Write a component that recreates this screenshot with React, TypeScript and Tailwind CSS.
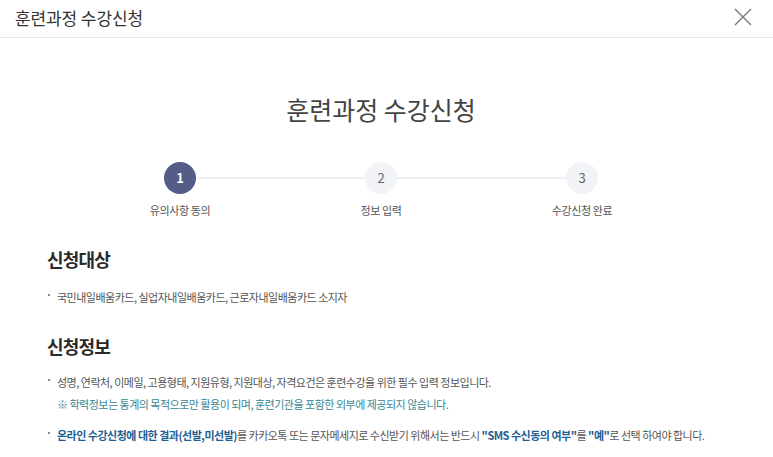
import React from "react";

const F = { fontFamily: '"Noto Sans CJK KR", "Noto Sans", sans-serif' };

function Bullet({ children, className = "" }: { children: React.ReactNode; className?: string }) {
  return (
    <div className={"flex items-start " + className}>
      <span className="mt-[5px] mr-[7px] ml-[1px] h-[2px] w-[2px] shrink-0 bg-[#888]" />
      <div>{children}</div>
    </div>
  );
}

export default function App() {
  const steps = [
    { n: "1", label: "유의사항 동의", active: true },
    { n: "2", label: "정보 입력", active: false },
    { n: "3", label: "수강신청 완료", active: false },
  ];
  return (
    <div style={F} className="w-[773px] h-[457px] bg-white overflow-hidden text-[#555]">
      <header className="h-[38px] border-b border-[#e6e6e6] flex items-center justify-between pl-[15px] pr-[21px]">
        <h1 className="text-[17px] leading-none text-[#333] tracking-[-0.1px] pb-[3px]">훈련과정 수강신청</h1>
        <svg width="18" height="18" viewBox="0 0 18 18" className="mb-[3px]">
          <path d="M1 1 L17 17 M17 1 L1 17" stroke="#777" strokeWidth="1.3" fill="none" />
        </svg>
      </header>
      <main className="pr-[11px]">
        <h2 className="mt-[55px] text-center text-[25px] leading-[32px] text-[#444] tracking-[0px]">훈련과정 수강신청</h2>
        <div className="relative mx-auto mt-[37px] w-[603px] grid grid-cols-3">
          <div className="absolute left-[100px] right-[100px] top-[15px] h-[2px] bg-[#eff0f3]" />
          {steps.map((s) => (
            <div key={s.n} className="relative flex flex-col items-center">
              <div
                className={
                  s.active
                    ? "h-[32px] w-[32px] rounded-full bg-[#535d88] text-white flex items-center justify-center text-[13px] font-bold"
                    : "h-[32px] w-[32px] rounded-full bg-[#f2f3f6] text-[#666] flex items-center justify-center text-[13px]"
                }
              >
                {s.n}
              </div>
              <div className="mt-[8px] text-[11px] leading-[16px] tracking-[-0.4px] text-[#555]">{s.label}</div>
            </div>
          ))}
        </div>
        <section className="pl-[47px] mt-[28px]">
          <h3 className="text-[18px] leading-[26px] font-bold text-[#2a2a2a] tracking-[-0.8px]">신청대상</h3>
          <div className="mt-[17px] text-[11px] leading-[16px] tracking-[-0.5px]">
            <Bullet>국민내일배움카드, 실업자내일배움카드, 근로자내일배움카드 소지자</Bullet>
          </div>
          <h3 className="mt-[28px] text-[18px] leading-[26px] font-bold text-[#2a2a2a] tracking-[-0.8px]">신청정보</h3>
          <div className="mt-[15px] text-[11px] leading-[16px] tracking-[-0.5px]">
            <Bullet>
              <div>성명, 연락처, 이메일, 고용형태, 지원유형, 지원대상, 자격요건은 훈련수강을 위한 필수 입력 정보입니다.</div>
              <div className="mt-[6px] text-[#3a8793]">※ 학력정보는 통계의 목적으로만 활용이 되며, 훈련기관을 포함한 외부에 제공되지 않습니다.</div>
            </Bullet>
            <Bullet className="mt-[15px]">
              <span className="font-bold text-[#1f5e93]">온라인 수강신청에 대한 결과(선발,미선발)</span>를 카카오톡 또는 문자메세지로 수신받기 위해서는 반드시{" "}
              <span className="font-bold text-[#1f5e93]">"SMS 수신동의 여부"</span>를{" "}
              <span className="font-bold text-[#1f5e93]">"예"</span>로 선택 하여야 합니다.
            </Bullet>
          </div>
        </section>
      </main>
    </div>
  );
}
